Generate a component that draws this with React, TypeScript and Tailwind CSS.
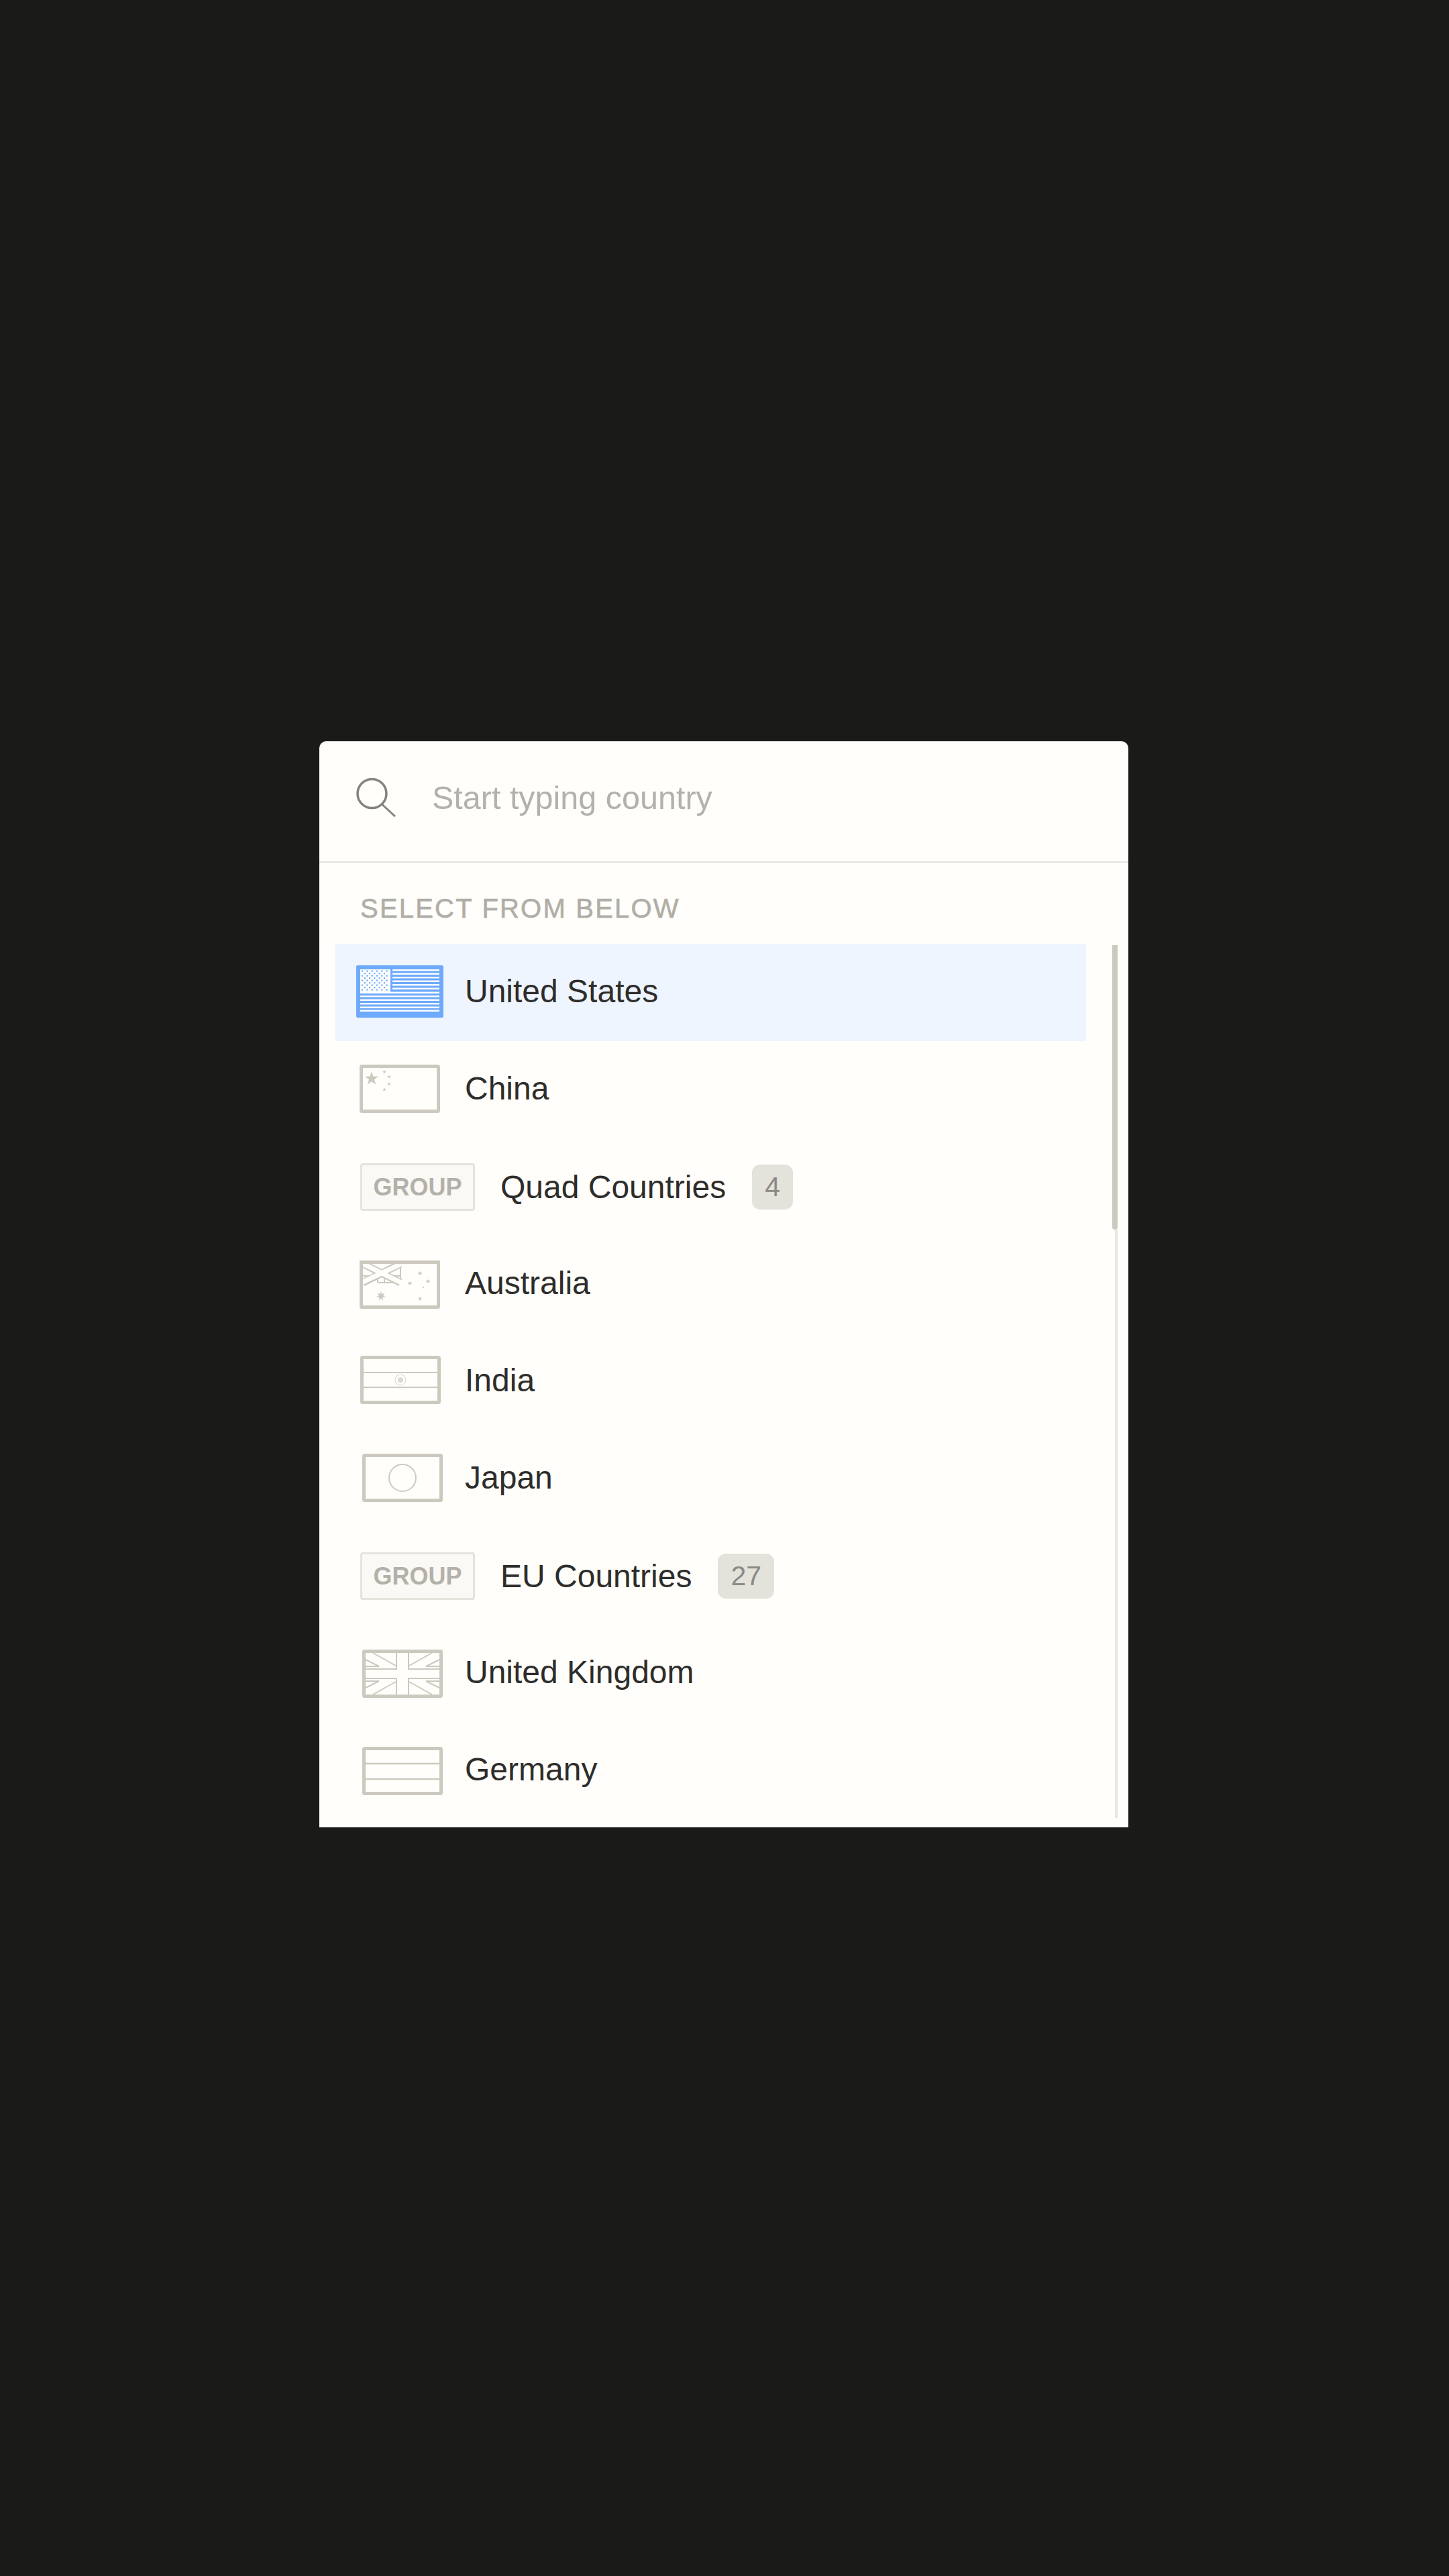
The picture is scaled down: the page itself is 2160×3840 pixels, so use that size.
import type { ReactNode } from 'react';

const points = (cx: number, cy: number, r: number, n: number, inner = 0.42) =>
  Array.from({ length: n * 2 }, (_, i) => {
    const a = (Math.PI * i) / n - Math.PI / 2;
    const d = i % 2 ? r * inner : r;
    return `${cx + d * Math.cos(a)},${cy + d * Math.sin(a)}`;
  }).join(' ');

function Frame({ children }: { children?: ReactNode }) {
  return (
    <svg width="120" height="72" viewBox="0 0 120 72" fill="none" className="block text-[#cdc9bf]">
      <rect x="2.5" y="2.5" width="115" height="67" rx="1" stroke="currentColor" strokeWidth="5" />
      {children}
    </svg>
  );
}

function UsFlag() {
  const short = [8.5, 14, 19.5, 25, 30.5, 36];
  const long = [42, 47.5, 53, 58.5, 64, 69];
  return (
    <svg width="130" height="78" viewBox="0 0 130 78" className="block">
      <rect width="130" height="78" rx="2" fill="#6eaafb" />
      <rect x="6" y="6" width="45" height="34" fill="#ffffff" />
      {Array.from({ length: 9 }, (_, i) =>
        Array.from({ length: 6 - (i % 2) }, (_, j) => (
          <rect
            key={`${i}-${j}`}
            x={8 + j * 7.3 + (i % 2) * 3.65}
            y={7.5 + i * 3.5}
            width="2.2"
            height="2.2"
            fill="#6eaafb"
          />
        ))
      )}
      {short.map((y) => (
        <rect key={y} x="54" y={y - 2.5} width="70" height="2.4" fill="#ffffff" />
      ))}
      {long.map((y) => (
        <rect key={y} x="6" y={y - 2.5} width="118" height="2.4" fill="#ffffff" />
      ))}
    </svg>
  );
}

function ChinaFlag() {
  return (
    <Frame>
      <g fill="currentColor">
        <polygon points={points(18, 21, 10.5, 5, 0.4)} />
        <polygon points={points(37, 11, 3, 5, 0.4)} />
        <polygon points={points(44, 18, 3, 5, 0.4)} />
        <polygon points={points(44, 29, 3, 5, 0.4)} />
        <polygon points={points(37, 37, 3, 5, 0.4)} />
      </g>
    </Frame>
  );
}

function AustraliaFlag() {
  return (
    <Frame>
      <g stroke="currentColor" strokeWidth="2">
        <path d="M27 33V23H5M37 33V23H61V33H27M61 23V5" fill="none" />
        <path d="M5 5L61 33M61 5L5 33" strokeWidth="11" />
        <path d="M3 4L62 33M62 5L3 33" stroke="#fffefa" strokeWidth="7" />
      </g>
      <rect x="0" y="0" width="120" height="5" fill="currentColor" />
      <rect x="0" y="0" width="5" height="40" fill="currentColor" />
      <g fill="currentColor">
        <polygon points={points(32, 53, 7.5, 7)} />
        <polygon points={points(90, 19, 3.6, 7)} />
        <polygon points={points(102, 31, 3.6, 7)} />
        <polygon points={points(95, 40, 2, 5)} />
        <polygon points={points(75, 34, 3.6, 7)} />
        <polygon points={points(90, 57, 3.6, 7)} />
      </g>
    </Frame>
  );
}

function IndiaFlag() {
  return (
    <Frame>
      <path d="M5 25H115M5 47H115" stroke="currentColor" strokeWidth="2" />
      <circle cx="60" cy="36" r="8" stroke="currentColor" strokeWidth="0.8" />
      <circle cx="60" cy="36" r="4" fill="currentColor" opacity="0.7" />
    </Frame>
  );
}

function JapanFlag() {
  return (
    <Frame>
      <circle cx="60" cy="36" r="20" stroke="currentColor" strokeWidth="2" />
    </Frame>
  );
}

function UkFlag() {
  const quarter = 'M16 5L50 24M51 5V28M5 29H52M5 15L25 25H5';
  return (
    <Frame>
      <g stroke="currentColor" strokeWidth="2">
        <path d={quarter} />
        <path d={quarter} transform="matrix(-1 0 0 1 120 0)" />
        <path d={quarter} transform="matrix(1 0 0 -1 0 72)" />
        <path d={quarter} transform="matrix(-1 0 0 -1 120 72)" />
      </g>
    </Frame>
  );
}

function GermanyFlag() {
  return (
    <Frame>
      <path d="M5 25H115M5 48H115" stroke="currentColor" strokeWidth="2.5" />
    </Frame>
  );
}

function SearchIcon() {
  return (
    <svg width="59" height="58" viewBox="0 0 59 58" fill="none" stroke="#85847e" className="shrink-0">
      <circle cx="23.5" cy="23" r="21.5" strokeWidth="3.5" />
      <path d="M38.5 39L58 57" strokeWidth="3" />
    </svg>
  );
}

function CountryRow({
  name,
  flag,
  offset,
  active
}: {
  name: string;
  flag: ReactNode;
  offset: string;
  active?: boolean;
}) {
  return (
    <div className={`flex h-[145px] items-center pl-[31px] ${active ? 'bg-[#eef5ff]' : ''}`}>
      <div className={`w-[130px] ${offset}`}>{flag}</div>
      <span className="mb-[4px] ml-[32px] text-[48px] leading-none text-[#2e2d2b]">{name}</span>
    </div>
  );
}

function GroupRow({ name, count }: { name: string; count: number }) {
  return (
    <div className="flex h-[145px] items-center pl-[37px]">
      <div className="flex h-[71px] w-[171px] items-center justify-center rounded-[4px] border-[3px] border-[#e5e3dc] bg-[#fbf9f5] text-[36px] font-semibold text-[#b3b1a9]">
        GROUP
      </div>
      <span className="ml-[38px] text-[48px] leading-none text-[#2e2d2b]">{name}</span>
      <span className="ml-[39px] flex h-[67px] items-center rounded-[12px] bg-[#e3e2db] px-[19px] text-[41px] text-[#8b8a85]">
        {count}
      </span>
    </div>
  );
}

export default function App() {
  return (
    <main className="min-h-screen bg-[#1a1a18] pl-[476px] pt-[1105px] font-['Liberation_Sans',sans-serif]">
      <div className="flex h-[1619px] w-[1206px] flex-col overflow-hidden rounded-t-[10px] bg-[#fffefa]">
        {/* search */}
        <div className="flex h-[181px] shrink-0 items-center gap-[54px] border-b-[2px] border-[#e5e3dc] pb-[11px] pl-[55px]">
          <SearchIcon />
          <input
            className="flex-1 bg-transparent text-[48.5px] outline-none placeholder:text-[#b3b1a9]"
            placeholder="Start typing country"
          />
        </div>
        <p className="pl-[61px] pt-[44px] text-[40px] leading-[48px] tracking-[2.2px] text-[#b0aea6] [-webkit-text-stroke:0.6px_#b0aea6]">
          SELECT FROM BELOW
        </p>
        {/* list */}
        <div className="mt-[29px] flex min-h-0 flex-1 pl-[24px]">
          <div className="w-[1119px]">
            <CountryRow name="United States" flag={<UsFlag />} offset="pb-[4px]" active />
            <CountryRow name="China" flag={<ChinaFlag />} offset="pb-[4px] pl-[5px]" />
            <GroupRow name="Quad Countries" count={4} />
            <CountryRow name="Australia" flag={<AustraliaFlag />} offset="pl-[5px]" />
            <CountryRow name="India" flag={<IndiaFlag />} offset="pb-[5px] pl-[6px]" />
            <CountryRow name="Japan" flag={<JapanFlag />} offset="pb-[4px] pl-[9px]" />
            <GroupRow name="EU Countries" count={27} />
            <CountryRow name="United Kingdom" flag={<UkFlag />} offset="pl-[9px]" />
            <CountryRow name="Germany" flag={<GermanyFlag />} offset="pl-[9px]" />
          </div>
          <div className="ml-[38px] flex w-[9px] flex-col items-end pb-[14px] pt-[2px]">
            <div className="h-[424px] w-[8px] shrink-0 rounded-b-[4px] bg-[#cdc9bf]" />
            <div className="w-[4px] flex-1 bg-[#e8e6e0]" />
          </div>
        </div>
      </div>
    </main>
  );
}
